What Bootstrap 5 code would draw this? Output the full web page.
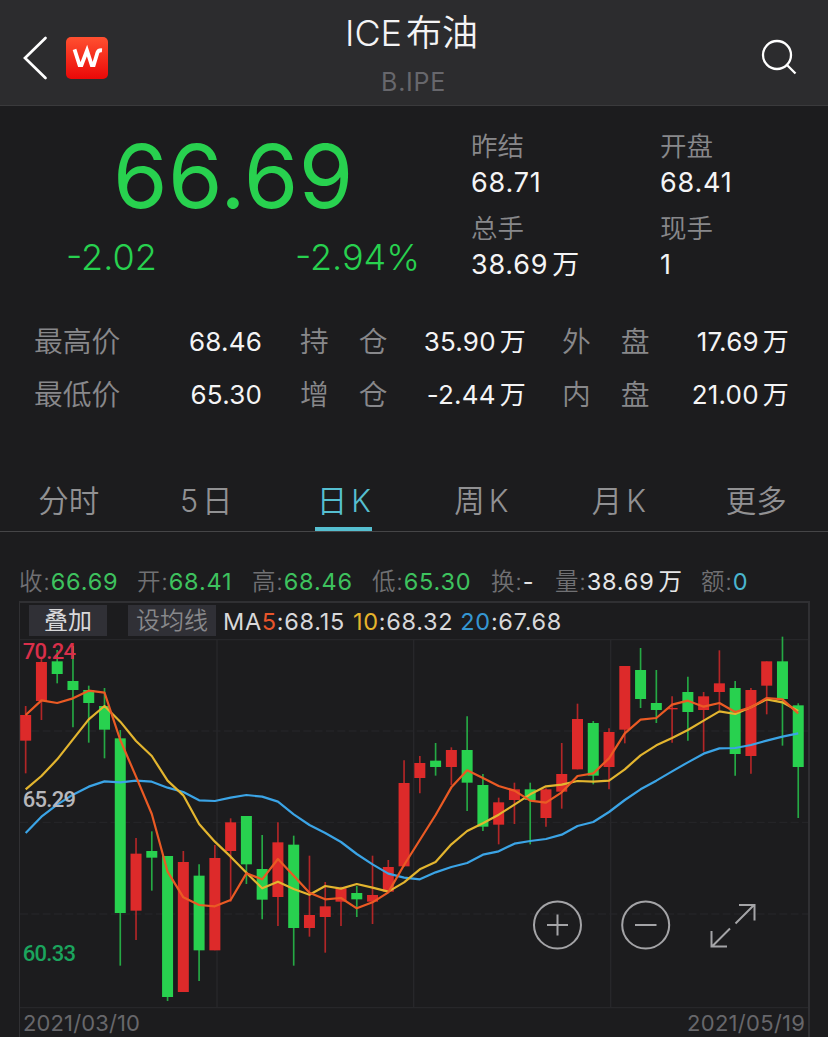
<!DOCTYPE html>
<html lang="zh-CN">
<head>
<meta charset="utf-8">
<meta name="viewport" content="width=device-width, initial-scale=1">
<title>ICE布油 B.IPE</title>
<link href="https://cdn.jsdelivr.net/npm/bootstrap@5.3.0/dist/css/bootstrap.min.css" rel="stylesheet">
<style>
  :root { --bg:#1c1c1e; --up:#dd2a2a; --down:#28d14f; --dim:#88888b; --cyan:#56bfd0; }
  body { background:var(--bg); color:#f4f4f5; font-family:Inter,"Noto Sans CJK SC",sans-serif; overflow:hidden; height:1037px; }
  .topbar { height:106px; background:#2c2c2e; border-bottom:1px solid #3a3a3c; padding:0 31px 0 22px; }
  .side { width:120px; }
  .topbar h1 { font-size:36px; line-height:44px; font-weight:350; margin:11px -4px 0 0; white-space:nowrap; }
  .code { font-size:25px; line-height:30px; color:#67676c; margin:12px -8px 0 0; letter-spacing:.7px; }
  .quote { height:202px; }
  .price-pane { width:471px; flex:none; color:var(--down); }
  .price { font-size:88px; line-height:96px; margin-top:22px; padding-left:113px; letter-spacing:.5px; }
  .change { font-size:36px; line-height:44px; margin-top:11px; padding:0 51px 0 66px; font-weight:350; }
  .facts { padding-top:22px; }
  .facts > div { width:189px; flex:none; }
  .facts dt { font-size:26.5px; line-height:37px; font-weight:350; color:var(--dim); }
  .facts dd { font-size:27px; line-height:36px; margin:0 0 8.5px; letter-spacing:.8px; white-space:nowrap; }
  .stats { padding:7px 39px 0 34px; display:grid; grid-template-columns:86px 142px 38px 86px 140px 36px 86px 141px; grid-auto-rows:53px; line-height:53px; }
  .stats span { font-size:28.8px; font-weight:350; color:var(--dim); white-space:nowrap; }
  .stats b { font-size:26px; font-weight:400; text-align:right; white-space:nowrap; letter-spacing:.2px; }
  .stats .c3 { grid-column:3 / span 2; padding-left:38px; }
  .tabs { height:63px; margin-top:48px; border-bottom:1px solid #454547; padding:0 3px 0 0; }
  .tabs a { flex:1 1 0; height:62px; line-height:63px; font-size:30.5px; font-weight:350; color:#919193; text-align:center; text-decoration:none; }
  .tabs a.active { color:var(--cyan); position:relative; }
  .tabs a.active::after { content:""; position:absolute; left:40px; bottom:0; width:57px; height:4px; background:var(--cyan); }
  .ohlc { height:69px; padding:31px 0 0 19px; font-size:23.5px; line-height:38px; white-space:nowrap; }
  .ohlc div { color:#707073; font-weight:350; letter-spacing:.8px; }
  .ohlc b { font-weight:400; }
  .green { color:#3ec25e; } .white { color:#e6e6e8; } .blue { color:#4ab5cf; }
  .chart { width:791px; margin-left:19px; height:436px; border:solid #303033; border-width:2px 2px 0 1px; }
  .tools { height:36px; font-size:23.5px; line-height:38px; white-space:nowrap; color:#d8d8da; letter-spacing:.7px; }
  .chip { background:#303036; height:31px; line-height:31px; margin-top:2px; text-align:center; font-size:24px; letter-spacing:0; }
  .plot { display:block; width:788px; height:399px; overflow:visible; }
  .control { position:absolute; left:510px; top:292px; pointer-events:none; }
</style>
</head>
<body>
<header class="topbar d-flex justify-content-between">
  <div class="side d-flex align-items-center">
    <svg width="100" height="60" viewBox="0 0 100 60" style="margin-top:14px">
      <defs><linearGradient id="logo" x2="0" y2="1"><stop stop-color="#ff5030"/><stop offset="1" stop-color="#ea0808"/></linearGradient></defs>
      <path d="M23.500 8 3 28 23.500 48" fill="none" stroke="#fff" stroke-width="2.700" stroke-linecap="round"/>
      <rect x="44" y="7" width="42" height="42" rx="5" fill="url(#logo)"/>
      <path d="M52.500 19.300 57.500 35H59.500L65 20.500 69.700 35H71.700L75.500 22.500Q76.500 20 80 20.300" fill="none" stroke="#fff" stroke-width="3.800"/>
    </svg>
  </div>
  <div class="text-center">
    <h1>ICE<span style="margin-left:4px">布油</span></h1>
    <div class="code">B.IPE</div>
  </div>
  <div class="side d-flex justify-content-end align-items-center">
    <svg width="36" height="36" viewBox="0 0 36 36" style="margin-top:8px" fill="none" stroke="#fff" stroke-width="2.300"><circle cx="16" cy="16" r="14"/><path d="m26 26 8.500 8.500"/></svg>
  </div>
</header>

<section class="quote d-flex">
  <div class="price-pane">
    <div class="price">66.69</div>
    <div class="change d-flex justify-content-between"><span>-2.02</span><span>-2.94%</span></div>
  </div>
  <div class="facts d-flex">
    <div><dl class="m-0"><dt>昨结</dt><dd>68.71</dd><dt>总手</dt><dd>38.69<i class="fst-normal ms-1">万</i></dd></dl></div>
    <div><dl class="m-0"><dt>开盘</dt><dd>68.41</dd><dt>现手</dt><dd>1</dd></dl></div>
  </div>
</section>

<section class="stats">
  <span>最高价</span><b>68.46</b><span class="c3">持<i class="fst-normal" style="margin-left:30px">仓</i></span><b>35.90<i class="fst-normal ms-1">万</i></b><i></i><span>外<i class="fst-normal" style="margin-left:30px">盘</i></span><b>17.69<i class="fst-normal ms-1">万</i></b>
  <span>最低价</span><b>65.30</b><span class="c3">增<i class="fst-normal" style="margin-left:30px">仓</i></span><b>-2.44<i class="fst-normal ms-1">万</i></b><i></i><span>内<i class="fst-normal" style="margin-left:30px">盘</i></span><b>21.00<i class="fst-normal ms-1">万</i></b>
</section>

<nav class="tabs d-flex">
  <a href="#">分时</a><a href="#">5<i class="fst-normal ms-1">日</i></a><a href="#" class="active">日<i class="fst-normal ms-1">K</i></a><a href="#">周<i class="fst-normal ms-1">K</i></a><a href="#">月<i class="fst-normal ms-1">K</i></a><a href="#">更多</a>
</nav>

<section class="ohlc d-flex">
  <div style="width:118px">收:<b class="green">66.69</b></div>
  <div style="width:115px">开:<b class="green">68.41</b></div>
  <div style="width:120px">高:<b class="green">68.46</b></div>
  <div style="width:119px">低:<b class="green">65.30</b></div>
  <div style="width:64px">换:<b class="white">-</b></div>
  <div style="width:146px">量:<b class="white">38.69<i class="fst-normal ms-1">万</i></b></div>
  <div>额:<b class="blue">0</b></div>
</section>

<section class="chart position-relative">
  <div class="tools d-flex">
    <div class="chip" style="width:78px;margin-left:9px">叠加</div>
    <div class="chip" style="width:88px;margin-left:21px;color:#88888b;font-weight:350">设均线</div>
    <div style="margin-left:7px">MA<span style="color:#e9552b">5</span>:68.15</div>
    <div style="margin-left:8px"><span style="color:#e5b42c">10</span>:68.32</div>
    <div style="margin-left:7px"><span style="color:#3596d2">20</span>:67.68</div>
  </div>
  <svg class="plot" id="plot" viewBox="60 27 2364 1197">
    <g stroke="#27272a" stroke-width="4">
      <path d="M60 29H2424M651 29V1131M1241 29V1131M1832 29V1131M60 1133H2424"/>
      <path d="M60 303H2424M60 577H2424M60 852H2424" stroke-dasharray="24 10" stroke-width="3"/>
    </g>
    <g id="candles"></g>
    <g id="averages" fill="none" stroke-width="6.600" stroke-linejoin="round"></g>
    <g font-family="Roboto, sans-serif" font-size="66" font-weight="500">
      <text x="68" y="87" textLength="160" fill="#d92f4a">70.24</text>
      <text x="68" y="531" textLength="160" fill="#b7b7bb">65.29</text>
      <text x="68" y="994" textLength="160" fill="#1ba45d">60.33</text>
    </g>
    <g font-family="Inter, sans-serif" font-size="66" fill="#67676b">
      <text x="69" y="1203" textLength="351">2021/03/10</text>
      <text x="2061" y="1203" textLength="354">2021/05/19</text>
    </g>
  </svg>
  <svg class="control" width="240" height="70" viewBox="0 0 240 70" fill="none" stroke="#a4a4a7" stroke-width="2">
    <circle cx="27.500" cy="30" r="23.500"/><path d="M17 30H38M27.500 19.500V40.500"/>
    <circle cx="115.700" cy="30" r="23.500"/><path d="M105 30H126.500"/>
    <path d="M205.500 28.500 224 10M209 10H224.500V25.500M200 33.500 182 51.500M181.500 36V51.500H197"/>
  </svg>
</section>

<script src="https://cdn.jsdelivr.net/npm/bootstrap@5.3.0/dist/js/bootstrap.bundle.min.js"></script>
<script>
  // direction, wick top, wick bottom, body top, body bottom
  const candles = `r 228 430 255 332|r 80 270 96 213|g 60 160 94 132|g 48 292 153 180|g 167 338 180 219|g 174 385 228 299|g 300 1007 325 849|r 624 930 671 842|g 604 782 663 683|g 678 1113 678 1101|r 663 1086 696 1086|g 703 1053 737 961|r 645 961 684 961|r 565 815 577 663|g 558 762 558 703|g 615 868 717 809|r 577 888 637 801|g 617 1007 644 894|r 677 920 855 894|r 756 968 829 861|r 770 888 775 815|g 768 861 789 808|r 677 882 795 815|r 690 785 711 785|r 391 710 459 709|r 378 490 399 444|g 339 437 392 411|r 352 465 360 411|g 259 543 360 458|g 432 603 465 590|r 503 643 517 584|r 458 582 478 510|g 458 643 478 510|r 475 590 478 564|r 339 536 432 485|r 221 418 267 418|g 273 463 279 437|r 295 478 306 411|r 108 340 108 299|g 54 234 120 207|g 120 279 219 240|r 199 338 234 238|g 140 332 186 246|r 186 365 199 240|r 61 240 160 186|g 153 437 174 372|r 174 431 180 378|r 94 253 94 167|g 20 347 94 207|g 220 564 226 411`.split('|').map(s => s.split(' '));
  const averages = [
    ['#3ba4e6', [609,560,524,494,470,454,457,452,455,473,486,511,513,503,495,500,515,553,585,609,636,672,703,731,743,748,727,711,699,674,664,641,633,627,614,588,576,546,510,478,452,424,397,371,355,354,345,332,320,310]],
    ['#e3b52f', [478,438,388,328,268,228,275,333,378,452,496,582,635,680,728,775,755,777,794,768,776,762,773,785,757,718,696,643,603,580,554,524,493,469,464,453,455,452,418,376,346,324,300,272,244,252,232,208,217,243]],
    ['#ea5a24', [255,211,219,205,182,188,330,440,552,725,802,825,829,810,730,748,687,737,788,808,804,835,817,787,705,630,555,472,421,444,468,482,512,518,487,438,430,385,310,269,264,224,212,230,219,246,232,204,208,250]]
  ];
  const x = i => 77 + 47.3 * i;
  document.getElementById('candles').innerHTML = candles.map(([d, wt, wb, bt, bb], i) => {
    const c = d === 'r' ? 'var(--up)' : 'var(--down)';
    return `<path d="M${x(i)} ${wt}V${wb}" stroke="${c}" stroke-width="5" opacity=".78"/><rect x="${x(i) - 16.5}" y="${bt}" width="33" height="${bb - bt}" fill="${c}"/>`;
  }).join('');
  document.getElementById('averages').innerHTML = averages.map(([c, v]) =>
    `<polyline stroke="${c}" points="${v.map((y, i) => x(i) + ',' + y).join(' ')}"/>`).join('');
</script>
</body>
</html>
